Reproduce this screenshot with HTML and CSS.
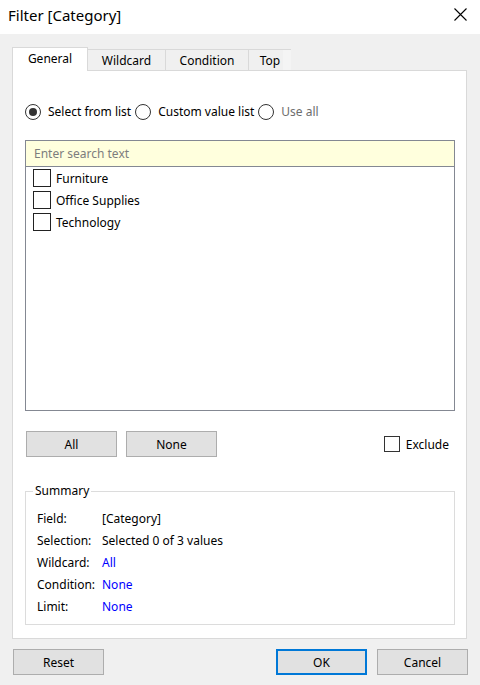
FILE: index.html
```html
<!DOCTYPE html>
<html>
<head>
<meta charset="utf-8">
<link rel="stylesheet" href="styles.css">
</head>
<body>
<div class="window">
  <div class="titlebar">
    <span class="title">Filter [Category]</span>
    <svg class="close" width="13" height="13" viewBox="0 0 13 13"><path d="M0.5 0.5 L12.5 12.5 M12.5 0.5 L0.5 12.5" stroke="#000" stroke-width="1.1" fill="none"/></svg>
  </div>
  <div class="main">
    <div class="tabs">
      <div class="tab active t-general">General</div>
      <div class="tab t-wild">Wildcard</div>
      <div class="tab t-cond">Condition</div>
      <div class="tab t-top">Top<span class="fade"></span></div>
    </div>
    <div class="panel">
      <div class="radios">
        <label class="radio"><span class="circle on"></span><span class="rtext">Select from list</span></label>
        <label class="radio"><span class="circle"></span><span class="rtext">Custom value list</span></label>
        <label class="radio"><span class="circle"></span><span class="rtext dim">Use all</span></label>
      </div>
      <div class="listbox">
        <div class="search">Enter search text</div>
        <div class="items">
          <div class="item"><span class="cb"></span><span>Furniture</span></div>
          <div class="item"><span class="cb"></span><span>Office Supplies</span></div>
          <div class="item"><span class="cb"></span><span>Technology</span></div>
        </div>
      </div>
      <div class="btnrow">
        <div class="btn w91">All</div>
        <div class="btn w91">None</div>
        <div class="spacer"></div>
        <label class="exclude"><span class="cb small"></span><span>Exclude</span></label>
      </div>
      <fieldset class="summary">
        <legend>Summary</legend>
        <div class="row"><span class="lbl">Field:</span><span>[Category]</span></div>
        <div class="row"><span class="lbl">Selection:</span><span>Selected 0 of 3 values</span></div>
        <div class="row"><span class="lbl">Wildcard:</span><span class="blue">All</span></div>
        <div class="row"><span class="lbl">Condition:</span><span class="blue">None</span></div>
        <div class="row"><span class="lbl">Limit:</span><span class="blue">None</span></div>
      </fieldset>
    </div>
    <div class="footer">
      <div class="btn w91">Reset</div>
      <div class="spacer"></div>
      <div class="btn w91 default">OK</div>
      <div class="btn w91 cancel">Cancel</div>
    </div>
  </div>
</div>
</body>
</html>
```
FILE: styles.css
```css
* { box-sizing: border-box; }
html, body { margin: 0; padding: 0; }
body {
  font-family: "Noto Sans", "Open Sans", sans-serif;
  font-size: 12px;
  color: #000;
  background: #f0f0f0;
}
.window {
  width: 480px;
  height: 685px;
  background: #f0f0f0;
  display: flex;
  flex-direction: column;
}
.titlebar {
  height: 34px;
  background: #fff;
  display: flex;
  justify-content: space-between;
  align-items: flex-start;
  padding: 0 13px 0 8px;
}
.title {
  font-size: 15px;
  line-height: 34px;
  margin-top: -2px;
}
.close { margin-top: 8px; }
.main {
  padding: 13px 13px 0 12px;
  display: flex;
  flex-direction: column;
}
.tabs {
  display: flex;
  align-items: flex-end;
  height: 23px;
}
.tab {
  height: 21px;
  background: #f0f0f0;
  border-top: 1px solid #d9d9d9;
  border-right: 1px solid #d9d9d9;
  display: flex;
  align-items: center;
  justify-content: center;
  padding-bottom: 0;
}
.tab.active {
  height: 24px;
  background: #fff;
  border: 1px solid #d9d9d9;
  border-bottom: none;
  margin-bottom: -1px;
  position: relative;
  z-index: 1;
  padding-bottom: 2px;
}
.t-general { width: 76px; }
.t-wild { width: 78px; }
.t-cond { width: 83px; }
.t-top { width: 42px; border-right: none; position: relative; }
.fade {
  position: absolute;
  right: 0;
  top: 0;
  width: 8px;
  height: 20px;
  background: rgba(245,245,245,0.85);
}
.panel {
  height: 569px;
  background: #fff;
  border: 1px solid #d9d9d9;
  padding: 33px 12px 0 12px;
  display: flex;
  flex-direction: column;
}
.radios {
  display: flex;
  height: 16px;
  align-items: center;
}
.radio {
  display: flex;
  align-items: center;
  margin-right: 4px;
}
.circle {
  width: 16px;
  height: 16px;
  border: 1px solid #333;
  border-radius: 50%;
  display: flex;
  align-items: center;
  justify-content: center;
  margin-right: 7px;
}
.circle.on::after {
  content: "";
  width: 8px;
  height: 8px;
  border-radius: 50%;
  background: #333;
}
.rtext { line-height: 16px; }
.dim { color: #6d6d6d; }
.listbox {
  margin-top: 20px;
  width: 430px;
  height: 271px;
  border: 1px solid #848892;
  display: flex;
  flex-direction: column;
}
.search {
  height: 26px;
  background: #ffffdd;
  border-bottom: 1px solid #848892;
  color: #7d7d7d;
  padding-left: 8px;
  display: flex;
  align-items: center;
}
.items { padding: 0 0 0 7px; }
.item {
  height: 22px;
  display: flex;
  align-items: center;
}
.cb {
  width: 18px;
  height: 18px;
  border: 1px solid #222;
  margin-right: 5px;
  background: #fff;
}
.cb.small {
  width: 16px;
  height: 16px;
  border-color: #333;
  margin-right: 6px;
}
.btnrow {
  margin-top: 20px;
  height: 26px;
  display: flex;
  align-items: center;
  padding-left: 1px;
  padding-right: 4px;
}
.btn {
  height: 26px;
  background: #e1e1e1;
  border: 1px solid #adadad;
  display: flex;
  align-items: center;
  justify-content: center;
}
.w91 { width: 91px; }
.btnrow .btn + .btn { margin-left: 9px; }
.spacer { flex: 1; }
.exclude {
  display: flex;
  align-items: center;
  margin-right: 1px;
}
.summary {
  margin: 27px 0 0 0;
  width: 430px;
  height: 141px;
  border: 1px solid #dcdcdc;
  padding: 9px 0 0 11px;
  min-width: 0;
}
.summary legend {
  padding: 0 2px;
  margin-left: -4px;
  line-height: 14px;
}
.row {
  height: 22px;
  display: flex;
  align-items: center;
}
.lbl { width: 65px; }
.blue { color: #0000ff; }
.footer {
  margin-top: 10px;
  display: flex;
  padding-left: 1px;
  margin-right: -1px;
}
.default { border: 2px solid #0078d7; }
.cancel { margin-left: 10px; }
```
